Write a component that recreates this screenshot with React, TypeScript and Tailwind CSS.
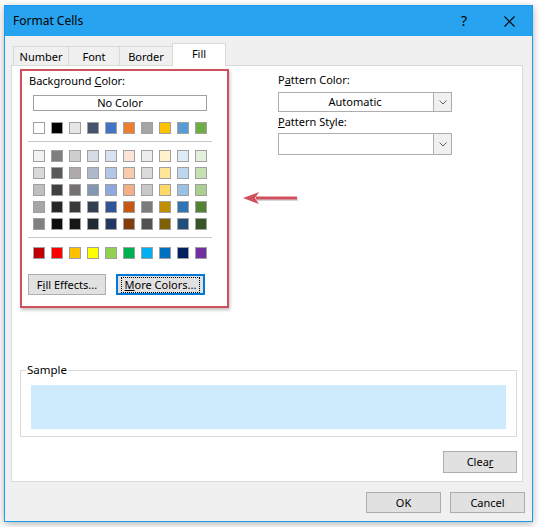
import React from "react";

const firstRow = [
  "bg-[#ffffff]",
  "bg-[#000000]",
  "bg-[#e7e6e6]",
  "bg-[#44546a]",
  "bg-[#4472c4]",
  "bg-[#ed7d31]",
  "bg-[#a5a5a5]",
  "bg-[#ffc000]",
  "bg-[#5b9bd5]",
  "bg-[#70ad47]",
];

const shadeRows = [
  ["bg-[#f2f2f2]", "bg-[#7f7f7f]", "bg-[#d0cece]", "bg-[#d6dce4]", "bg-[#d9e1f2]", "bg-[#fce4d6]", "bg-[#ededed]", "bg-[#fff2cc]", "bg-[#ddebf7]", "bg-[#e2efda]"],
  ["bg-[#d9d9d9]", "bg-[#595959]", "bg-[#aeaaaa]", "bg-[#adb9ca]", "bg-[#b4c6e7]", "bg-[#f8cbad]", "bg-[#dbdbdb]", "bg-[#ffe699]", "bg-[#bdd7ee]", "bg-[#c6e0b4]"],
  ["bg-[#bfbfbf]", "bg-[#404040]", "bg-[#757171]", "bg-[#8497b0]", "bg-[#8ea9db]", "bg-[#f4b084]", "bg-[#c9c9c9]", "bg-[#ffd966]", "bg-[#9bc2e6]", "bg-[#a9d08e]"],
  ["bg-[#a6a6a6]", "bg-[#262626]", "bg-[#3a3838]", "bg-[#333f4f]", "bg-[#305496]", "bg-[#c65911]", "bg-[#7b7b7b]", "bg-[#bf8f00]", "bg-[#2f75b5]", "bg-[#548235]"],
  ["bg-[#808080]", "bg-[#0d0d0d]", "bg-[#161616]", "bg-[#222b35]", "bg-[#203764]", "bg-[#833c0c]", "bg-[#525252]", "bg-[#806000]", "bg-[#1f4e78]", "bg-[#375623]"],
];

const standardRow = [
  "bg-[#c00000]",
  "bg-[#ff0000]",
  "bg-[#ffc000]",
  "bg-[#ffff00]",
  "bg-[#92d050]",
  "bg-[#00b050]",
  "bg-[#00b0f0]",
  "bg-[#0070c0]",
  "bg-[#002060]",
  "bg-[#7030a0]",
];

function SwatchRow({ colors }: { colors: string[] }) {
  return (
    <div className="flex gap-[6px] ml-[11px]">
      {colors.map((c, i) => (
        <div key={i} className={`w-[12px] h-[12px] border border-[#a0a0a0] ${c}`} />
      ))}
    </div>
  );
}

function Tab({ label, active }: { label: string; active?: boolean }) {
  if (active) {
    return (
      <div className="h-[23px] w-[54px] bg-white border border-b-0 border-[#d9d9d9] flex items-center justify-center pb-[2px] -mx-[1px] relative z-10">
        {label}
      </div>
    );
  }
  return (
    <div className="h-[20px] bg-[#f0f0f0] border border-b-0 border-r-0 border-[#d9d9d9] flex items-center justify-center pt-[1px]">
      {label}
    </div>
  );
}

function Dropdown({ value, tall }: { value?: string; tall?: boolean }) {
  return (
    <div
      className={`w-[174px] ${tall ? "h-[22px]" : "h-[20px]"} border border-[#adadad] bg-white flex`}
    >
      <div className="flex-1 flex items-center justify-center pr-[2px]">{value}</div>
      <div className="w-[18px] border-l border-[#adadad] bg-[#f0f0f0] flex items-center justify-center">
        <svg width="8" height="5" viewBox="0 0 8 5">
          <path d="M0.5 0.5 L4 4 L7.5 0.5" fill="none" stroke="#606060" strokeWidth="1" />
        </svg>
      </div>
    </div>
  );
}

function Btn({ children, className = "" }: { children: React.ReactNode; className?: string }) {
  return (
    <div
      className={`h-[21px] bg-[#e1e1e1] border border-[#adadad] flex items-center justify-center whitespace-nowrap ${className}`}
    >
      {children}
    </div>
  );
}

export default function App() {
  return (
    <div className="w-[539px] h-[527px] bg-white relative overflow-hidden pt-[5px] pl-[4px] text-[11px] leading-[16px] text-black font-['Noto_Sans',sans-serif]">
      <div className="w-[529px] h-[517px] border border-[#1a9bef] bg-[#f0f0f0] flex flex-col shadow-[0_2px_8px_rgba(0,0,0,0.3)]">
        {/* title bar */}
        <div className="h-[30px] bg-[#28a3ef] flex items-center pl-[8px] shrink-0">
          <span className="text-[12px]">Format Cells</span>
          <span className="ml-auto mr-[37px] text-[14px]">?</span>
          <svg width="11" height="11" viewBox="0 0 11 11" className="mr-[17px]">
            <path d="M0.5 0.5 L10.5 10.5 M10.5 0.5 L0.5 10.5" stroke="#000" strokeWidth="1.1" />
          </svg>
        </div>

        <div className="flex-1 flex flex-col pt-[7px]">
          {/* tabs */}
          <div className="flex items-end ml-[8px] -mb-[1px]">
            <div className="w-[55px]">
              <Tab label="Number" />
            </div>
            <div className="w-[51px]">
              <Tab label="Font" />
            </div>
            <div className="w-[54px] border-r border-[#d9d9d9]">
              <Tab label="Border" />
            </div>
            <Tab label="Fill" active />
          </div>

          {/* panel */}
          <div className="ml-[6px] w-[512px] h-[417px] bg-white border border-[#d9d9d9] flex flex-col">
            <div className="flex items-start">
              <div className="ml-[8px] mt-[3px] w-[209px] h-[239px] border-2 border-[#d1505e] shadow-[1px_2px_3px_rgba(0,0,0,0.25)] flex flex-col">
                <div className="pl-[7px] mt-[2px]">
                  Background <span className="underline">C</span>olor:
                </div>
                <div className="ml-[11px] mt-[6px] w-[174px] h-[16px] border border-[#a0a0a0] flex items-center justify-center">
                  No Color
                </div>
                <div className="mt-[11px]">
                  <SwatchRow colors={firstRow} />
                </div>
                <div className="ml-[6px] mt-[7px] w-[184px] h-px bg-[#c8c8c8]" />
                <div className="mt-[8px] flex flex-col gap-[5px]">
                  {shadeRows.map((row, i) => (
                    <SwatchRow key={i} colors={row} />
                  ))}
                </div>
                <div className="ml-[6px] mt-[7px] w-[184px] h-px bg-[#c8c8c8]" />
                <div className="mt-[9px]">
                  <SwatchRow colors={standardRow} />
                </div>
                <div className="flex mt-[15px] ml-[6px] gap-[10px]">
                  <Btn className="w-[78px]">
                    <span>
                      F<span className="underline">i</span>ll Effects...
                    </span>
                  </Btn>
                  <div className="w-[89px] h-[21px] border-2 border-[#0078d7] bg-[#e1e1e1] flex items-center justify-center whitespace-nowrap">
                    <span className="border border-dotted border-black px-[3px] leading-[14px]">
                      <span className="underline">M</span>ore Colors...
                    </span>
                  </div>
                </div>
              </div>

              <div className="ml-[49px] mt-[6px] flex flex-col">
                <div>
                  P<span className="underline">a</span>ttern Color:
                </div>
                <div className="mt-[4px]">
                  <Dropdown value="Automatic" />
                </div>
                <div className="mt-[2px]">
                  <span className="underline">P</span>attern Style:
                </div>
                <div className="mt-[3px]">
                  <Dropdown tall />
                </div>
              </div>
            </div>

            <div className="flex flex-col items-end w-[497px] ml-[8px] mt-[54px]">
              <fieldset className="w-[497px] h-[75px] border border-[#d9d9d9]">
                <legend className="ml-[5px] px-[1px] text-[11.5px]">Sample</legend>
                <div className="h-[44px] mt-[7px] mx-[10px] bg-[#cdebfc]" />
              </fieldset>
              <Btn className="w-[74px] h-[22px] mt-[14px]">
                <span>
                  Clea<span className="underline">r</span>
                </span>
              </Btn>
            </div>
          </div>

          {/* footer */}
          <div className="flex justify-end gap-[9px] pr-[7px] mt-[10px]">
            <Btn className="w-[75px]">OK</Btn>
            <Btn className="w-[75px]">Cancel</Btn>
          </div>
        </div>
      </div>

      {/* annotation arrow */}
      <svg
        className="absolute left-[242px] top-[191px]"
        width="58"
        height="14"
        viewBox="0 0 58 14"
      >
        <path d="M14 7 L55 7" stroke="#b0b0b0" strokeWidth="3" transform="translate(1 1.5)" opacity="0.5" />
        <path d="M14 7 L55 7" stroke="#d1505e" strokeWidth="3" />
        <polygon points="1,7 17,1 13,7 17,13" fill="#d1505e" />
      </svg>
    </div>
  );
}
